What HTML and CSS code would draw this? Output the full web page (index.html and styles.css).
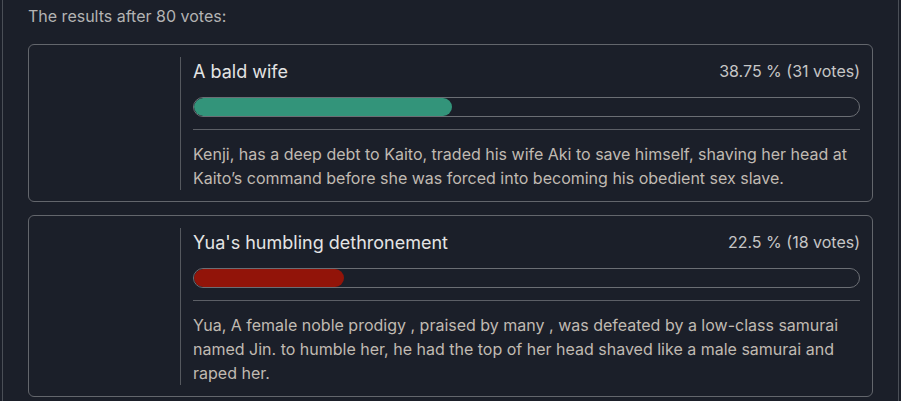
FILE: index.html
```html
<!DOCTYPE html>
<html lang="en">
<head>
    <meta charset="UTF-8">
    <meta name="viewport" content="width=device-width, initial-scale=1.0">
    <title>Poll results</title>
    <link rel="stylesheet" href="styles.css">
</head>
<body>
    <div class="container">
        <p class="summary">The results after 80 votes:</p>

        <div class="results">
            <div class="option">
                <div class="option-image"></div>
                <div class="option-body">
                    <div class="option-head">
                        <span class="option-title">A bald wife</span>
                        <span class="option-count">38.75 % (31 votes)</span>
                    </div>
                    <div class="bar">
                        <div class="bar-fill green" style="width: 38.75%"></div>
                    </div>
                    <hr>
                    <p class="option-text">Kenji, has a deep debt to Kaito, traded his wife Aki to save himself, shaving her head at Kaito’s command before she was forced into becoming his obedient sex slave.</p>
                </div>
            </div>

            <div class="option">
                <div class="option-image"></div>
                <div class="option-body">
                    <div class="option-head">
                        <span class="option-title">Yua's humbling dethronement</span>
                        <span class="option-count">22.5 % (18 votes)</span>
                    </div>
                    <div class="bar">
                        <div class="bar-fill red" style="width: 22.5%"></div>
                    </div>
                    <hr>
                    <p class="option-text">Yua, A female noble prodigy , praised by many , was defeated by a low-class samurai named Jin. to humble her, he had the top of her head shaved like a male samurai and raped her.</p>
                </div>
            </div>
        </div>
    </div>
</body>
</html>
```

FILE: styles.css
```css
body {
    margin: 0;
    background-color: #1b1f29;
    font-family: Inter, "Noto Sans", sans-serif;
    color: #c4bfb8;
    overflow: hidden;
}

.container {
    width: 845px;
    height: 401px;
    margin-left: 2px;
    padding: 0 25px;
    border-left: 1px solid #4a4e56;
    border-right: 1px solid #4a4e56;
}

.summary {
    margin: 0;
    padding-top: 5px;
    font-size: 16px;
    line-height: 22px;
    color: #b3b3b3;
}

.results {
    display: flex;
    flex-direction: column;
    gap: 13px;
    margin-top: 17px;
}

.option {
    display: flex;
    padding: 12px 12px 11px 0;
    border: 1px solid #63666c;
    border-radius: 6px;
}

.option-image {
    width: 151px;
    flex-shrink: 0;
}

.option-body {
    flex: 1;
    padding-left: 12px;
    border-left: 1px solid #55585e;
}

.option-head {
    display: flex;
    justify-content: space-between;
    align-items: center;
    height: 28px;
}

.option-title {
    font-size: 18px;
    color: #e4e4e4;
}

.option-count {
    font-size: 16px;
    color: #c6c6c6;
}

.bar {
    height: 18px;
    margin-top: 12px;
    border: 1px solid #6b6e74;
    border-radius: 10px;
    overflow: hidden;
}

.bar-fill {
    height: 100%;
    border-radius: 10px;
}

.bar-fill.green {
    background-color: #33947a;
}

.bar-fill.red {
    background-color: #921409;
}

hr {
    margin: 12px 0 0;
    border: none;
    border-top: 1px solid #5c5f66;
}

.option-text {
    margin: 12px 0 0;
    font-size: 16px;
    line-height: 24px;
    color: #c0bab2;
}
```
